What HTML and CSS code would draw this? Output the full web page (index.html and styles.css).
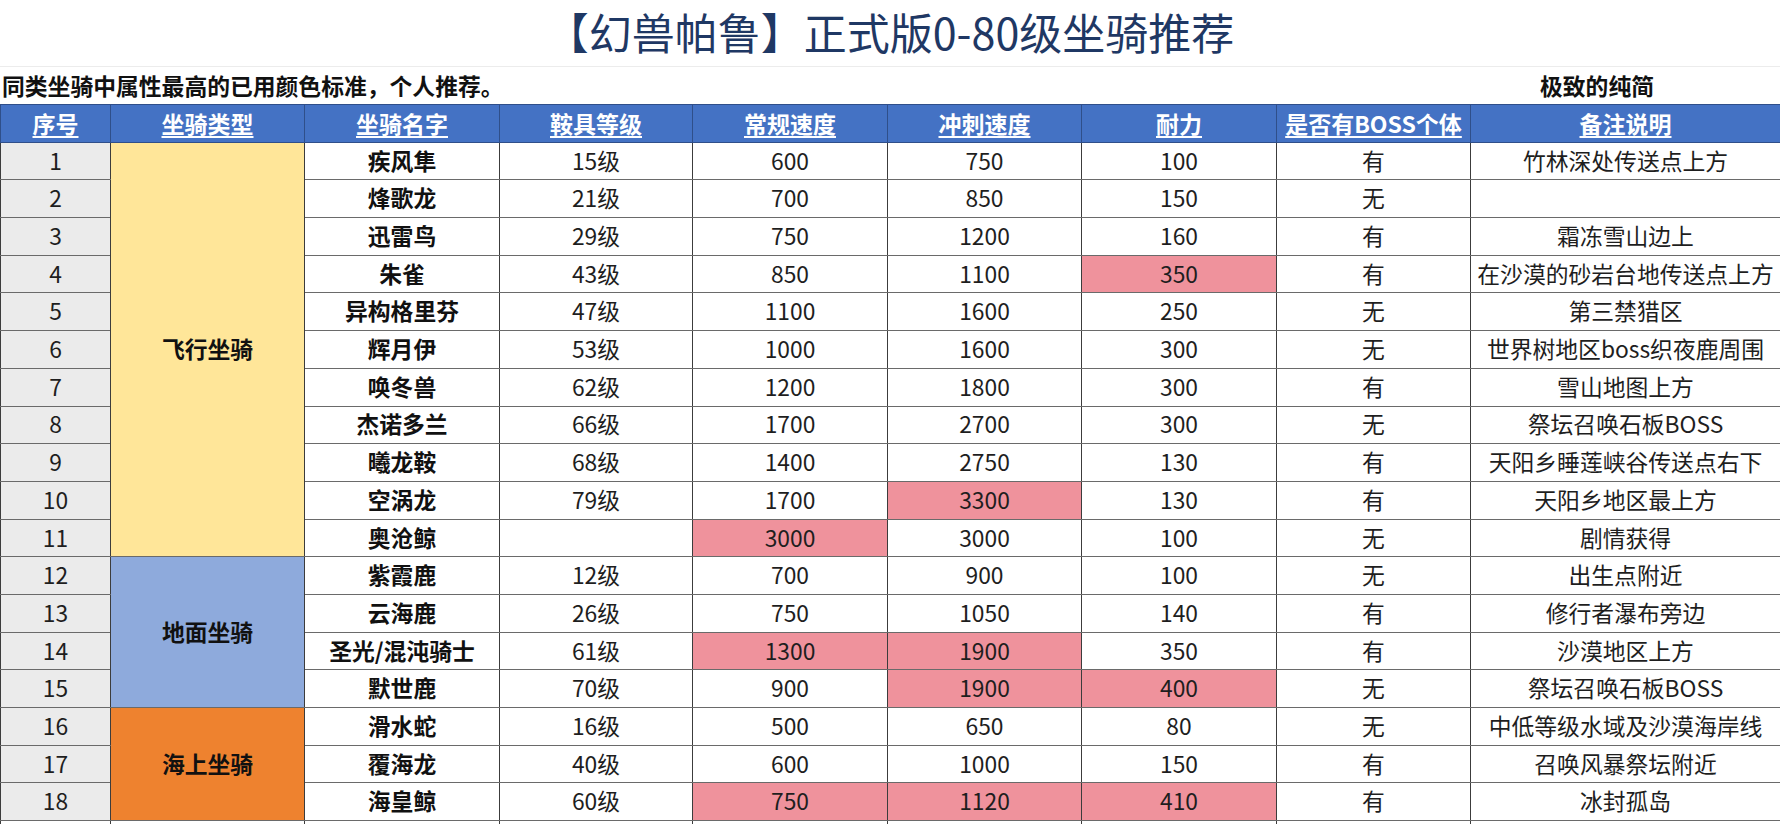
FILE: index.html
```html
<!DOCTYPE html>
<html lang="zh-CN">
<head>
<meta charset="utf-8">
<title>幻兽帕鲁坐骑推荐</title>
<link rel="stylesheet" href="styles.css">
</head>
<body>
<div class="sheet">
  <div class="title">【幻兽帕鲁】正式版0-80级坐骑推荐</div>
  <div class="subtitle">
    <span class="sub-left">同类坐骑中属性最高的已用颜色标准，个人推荐。</span>
    <span class="sub-right">极致的纯简</span>
  </div>
  <table class="grid">
    <colgroup>
      <col class="c-no"><col class="c-type"><col class="c-name"><col class="c-lv"><col class="c-spd"><col class="c-dash"><col class="c-sta"><col class="c-boss"><col class="c-note">
    </colgroup>
    <thead>
      <tr class="head">
        <th><span>序号</span></th><th><span>坐骑类型</span></th><th><span>坐骑名字</span></th><th><span>鞍具等级</span></th><th><span>常规速度</span></th><th><span>冲刺速度</span></th><th><span>耐力</span></th><th><span>是否有BOSS个体</span></th><th><span>备注说明</span></th>
      </tr>
    </thead>
    <tbody>
      <tr><td class="no">1</td><td class="type fly" rowspan="11">飞行坐骑</td><td class="name">疾风隼</td><td>15级</td><td>600</td><td>750</td><td>100</td><td>有</td><td>竹林深处传送点上方</td></tr>
      <tr><td class="no">2</td><td class="name">烽歌龙</td><td>21级</td><td>700</td><td>850</td><td>150</td><td>无</td><td></td></tr>
      <tr><td class="no">3</td><td class="name">迅雷鸟</td><td>29级</td><td>750</td><td>1200</td><td>160</td><td>有</td><td>霜冻雪山边上</td></tr>
      <tr><td class="no">4</td><td class="name">朱雀</td><td>43级</td><td>850</td><td>1100</td><td class="hl">350</td><td>有</td><td>在沙漠的砂岩台地传送点上方</td></tr>
      <tr><td class="no">5</td><td class="name">异构格里芬</td><td>47级</td><td>1100</td><td>1600</td><td>250</td><td>无</td><td>第三禁猎区</td></tr>
      <tr><td class="no">6</td><td class="name">辉月伊</td><td>53级</td><td>1000</td><td>1600</td><td>300</td><td>无</td><td>世界树地区boss织夜鹿周围</td></tr>
      <tr><td class="no">7</td><td class="name">唤冬兽</td><td>62级</td><td>1200</td><td>1800</td><td>300</td><td>有</td><td>雪山地图上方</td></tr>
      <tr><td class="no">8</td><td class="name">杰诺多兰</td><td>66级</td><td>1700</td><td>2700</td><td>300</td><td>无</td><td>祭坛召唤石板BOSS</td></tr>
      <tr><td class="no">9</td><td class="name">曦龙鞍</td><td>68级</td><td>1400</td><td>2750</td><td>130</td><td>有</td><td>天阳乡睡莲峡谷传送点右下</td></tr>
      <tr><td class="no">10</td><td class="name">空涡龙</td><td>79级</td><td>1700</td><td class="hl">3300</td><td>130</td><td>有</td><td>天阳乡地区最上方</td></tr>
      <tr><td class="no">11</td><td class="name">奥沧鲸</td><td></td><td class="hl">3000</td><td>3000</td><td>100</td><td>无</td><td>剧情获得</td></tr>
      <tr><td class="no">12</td><td class="type ground" rowspan="4">地面坐骑</td><td class="name">紫霞鹿</td><td>12级</td><td>700</td><td>900</td><td>100</td><td>无</td><td>出生点附近</td></tr>
      <tr><td class="no">13</td><td class="name">云海鹿</td><td>26级</td><td>750</td><td>1050</td><td>140</td><td>有</td><td>修行者瀑布旁边</td></tr>
      <tr><td class="no">14</td><td class="name">圣光/混沌骑士</td><td>61级</td><td class="hl">1300</td><td class="hl">1900</td><td>350</td><td>有</td><td>沙漠地区上方</td></tr>
      <tr><td class="no">15</td><td class="name">默世鹿</td><td>70级</td><td>900</td><td class="hl">1900</td><td class="hl">400</td><td>无</td><td>祭坛召唤石板BOSS</td></tr>
      <tr><td class="no">16</td><td class="type sea" rowspan="3">海上坐骑</td><td class="name">滑水蛇</td><td>16级</td><td>500</td><td>650</td><td>80</td><td>无</td><td>中低等级水域及沙漠海岸线</td></tr>
      <tr><td class="no">17</td><td class="name">覆海龙</td><td>40级</td><td>600</td><td>1000</td><td>150</td><td>有</td><td>召唤风暴祭坛附近</td></tr>
      <tr><td class="no">18</td><td class="name">海皇鲸</td><td>60级</td><td class="hl">750</td><td class="hl">1120</td><td class="hl">410</td><td>有</td><td>冰封孤岛</td></tr>
      <tr class="blank"><td></td><td></td><td></td><td></td><td></td><td></td><td></td><td></td><td></td></tr>
    </tbody>
  </table>
</div>
</body>
</html>
```

FILE: styles.css
```css
html, body {
  margin: 0;
  padding: 0;
  background: #ffffff;
}
body {
  font-family: "Noto Sans CJK SC", "Noto Sans", sans-serif;
  color: #1e1e1e;
  width: 1780px;
  height: 824px;
  overflow: hidden;
}
.sheet {
  width: 1780px;
}
.title {
  height: 63px;
  padding-bottom: 3px;
  border-bottom: 1px solid #ececec;
  display: flex;
  align-items: center;
  justify-content: center;
  font-size: 43px;
  color: #1f3864;
  line-height: 1;
}
.subtitle {
  height: 37px;
  display: flex;
  align-items: center;
  font-size: 22.8px;
  font-weight: 700;
  color: #111;
}
.sub-left {
  padding-left: 2px;
  flex: 1;
}
.sub-right {
  width: 240px;
}
.grid {
  width: 1780px;
  table-layout: fixed;
  border-collapse: collapse;
  font-size: 22.8px;
}
.c-no { width: 110px; }
.c-type { width: 194px; }
.c-name { width: 195px; }
.c-lv { width: 193px; }
.c-spd { width: 195px; }
.c-dash { width: 194px; }
.c-sta { width: 195px; }
.c-boss { width: 194px; }
.c-note { width: 310px; }
.grid th, .grid td {
  height: 36.7px;
  padding: 0;
  text-align: center;
  vertical-align: middle;
  border: 1px solid #3c3c3c;
  line-height: 1;
  white-space: nowrap;
  overflow: hidden;
}
.grid td {
  border-top-color: #6a6a6a;
  border-bottom-color: #6a6a6a;
}
.head th {
  background: #4472c4;
  color: #ffffff;
  font-weight: 700;
  font-size: 23px;
  border-color: #2f4f8a;
}
.head th span {
  text-decoration: underline;
  text-decoration-thickness: 1.5px;
  text-underline-offset: 3px;
}
.no {
  background: #ebebeb;
}
.type {
  font-weight: 700;
  color: #111;
}
.fly { background: #ffe699; }
.ground { background: #8eaadc; }
.sea { background: #ee822f; }
.name {
  font-weight: 700;
  color: #111;
}
.hl {
  background: #ef929c;
}
.blank td {
  height: 20px;
}
```
